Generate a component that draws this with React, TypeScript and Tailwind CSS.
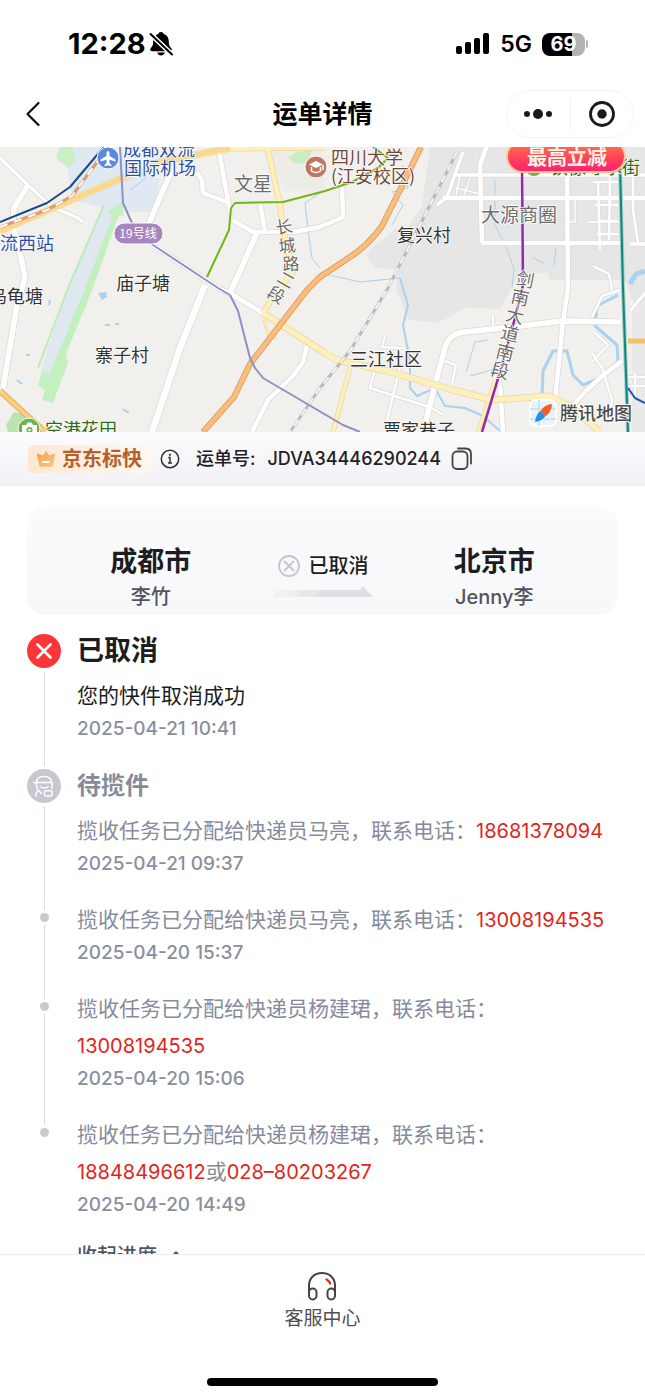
import { Fragment } from "react";

type Step = {
  title?: string;
  icon?: "cancel" | "courier";
  text: string;
  phones?: string[];
  time: string;
  active?: boolean;
};

const steps: Step[] = [
  {
    title: "已取消",
    icon: "cancel",
    text: "您的快件取消成功",
    time: "2025-04-21 10:41",
    active: true,
  },
  {
    title: "待揽件",
    icon: "courier",
    text: "揽收任务已分配给快递员马亮，联系电话：",
    phones: ["18681378094"],
    time: "2025-04-21 09:37",
  },
  {
    text: "揽收任务已分配给快递员马亮，联系电话：",
    phones: ["13008194535"],
    time: "2025-04-20 15:37",
  },
  {
    text: "揽收任务已分配给快递员杨建珺，联系电话：",
    phones: ["13008194535"],
    time: "2025-04-20 15:06",
  },
  {
    text: "揽收任务已分配给快递员杨建珺，联系电话：",
    phones: ["18848496612", "028–80203267"],
    time: "2025-04-20 14:49",
  },
];

// Map geometry: [path, width]
const whiteRoads: [string, number][] = [
  ["M0,158 L28,185 L52,207 L78,218 L83,222", 4],
  ["M28,185 L14,208 L13,225 L22,262 L25,278 L17,305 L3,388", 6],
  ["M174,165 L147,228", 6],
  ["M218,145 L230,212", 5],
  ["M190,172 L198,174 L202,180 L203,193 L227,202", 5],
  ["M232,220 L253,232 L293,232 L320,227 L343,217 L342,186", 5],
  ["M257,233 L230,293", 6],
  ["M205,285 L180,348 L152,432", 7],
  ["M260,203 L265,232", 5],
  ["M153,245 L218,288 L233,295 L263,313", 5],
  ["M307,346 L303,362 L293,376 L268,400 L252,432", 5],
  ["M487,145 L480,165 L482,243", 5],
  ["M443,198 L645,198", 5],
  ["M453,175 L645,175", 4],
  ["M463,152 L447,197 L437,205", 4],
  ["M482,243 L620,243", 5],
  ["M630,244 L645,244", 4],
  ["M567,172 L568,288 L563,321 L555,401", 5],
  ["M620,322 L563,321 L503,328 L465,332 Q448,334 445,348 L435,385 L423,432", 6],
  ["M385,336 L382,347 L402,348", 3],
  ["M376,366 L370,388 L432,408 L443,415", 3],
  ["M400,366 L387,421", 3],
  ["M445,361 L456,365 L452,384", 3],
  ["M493,316 L493,326", 3],
  ["M500,385 L503,432", 5],
  ["M622,361 L603,375 L585,392 L573,405", 5],
  ["M592,353 L602,368 L612,400 L610,420", 3],
  ["M592,362 L608,345 L594,332", 3],
  ["M645,293 L630,311", 4],
  ["M592,317 L602,296 L620,290", 3],
  ["M593,266 L609,274 L612,290", 3],
  ["M628,377 L645,377 M628,386 L645,386 M635,374 L635,396", 3],
  ["M593,182 L618,182 M595,205 L618,205 M597,221 L618,221 M597,234 L618,234", 3],
  ["M598,182 L600,250 M610,175 L609,240 M633,175 L633,210 L638,243", 3],
  ["M456,188 L480,194 M460,176 L456,195 M470,178 L463,198", 2],
  ["M575,200 L575,222 L568,222 M587,222 L620,222", 2],
];

const yellowRoads: [string, number][] = [
  ["M0,231 L60,205 L113,182 L160,162 L230,148 L325,147", 7],
  ["M267,145 L280,205 L283,228 L293,272 L273,297 L263,313", 6],
  ["M263,313 L280,324 L325,353 L337,360 L387,371 L453,390 L493,400 L550,396 L573,408 L600,432", 7],
  ["M350,368 L333,432", 5],
  ["M495,380 L478,432", 4],
  ["M263,315 L268,335 L275,338 L272,330", 3],
];

const rivers: [string, number][] = [
  ["M618,295 L597,306 L595,326 L617,345 L618,361 L600,378 L583,385 L573,375 L567,351 L553,351 L543,371 L542,398", 3],
  ["M645,271 L636,274 L630,284", 5],
  ["M400,278 L408,305 L403,325 L410,361 L410,388 L417,396 L435,388 L445,406 L465,408 L483,416 L500,431", 2],
  ["M320,273 L360,282 L400,278", 1],
  ["M402,165 L408,188 L392,192 L403,205 L392,225", 1],
  ["M320,193 L305,203 L308,230 L312,258 L320,268", 1],
  ["M505,245 L514,268 L512,288 M495,180 L495,225 L505,245", 1],
  ["M488,340 L475,342 L466,372 M500,352 L492,370 L470,376", 1],
  ["M532,257 L545,264 M556,248 L554,266", 1],
  ["M130,190 L146,178", 1],
  ["M50,300 L49,305 M105,325 h5 M115,324 h4 M26,355 h4 M17,380 l5,4 M123,409 l6,4", 2],
];

type Label = [text: string, x: number, y: number, size: number, fill: string];

const labels: Label[] = [
  ["成都双流", 123, 156, 18, "#2d50a5"],
  ["国际机场", 124, 175, 18, "#2d50a5"],
  ["流西站", 0, 250, 18, "#2d50a5"],
  ["文星", 234, 191, 19, "#6d6d6d"],
  ["四川大学", 331, 164, 18, "#70453a"],
  ["(江安校区)", 331, 183, 18, "#70453a"],
  ["复兴村", 397, 242, 18, "#333333"],
  ["大源商圈", 481, 222, 19, "#6d6d6d"],
  ["庙子塘", 116, 290, 18, "#333333"],
  ["乌龟塘", -11, 303, 18, "#333333"],
  ["寨子村", 95, 362, 18, "#333333"],
  ["三江社区", 350, 366, 18, "#333333"],
  ["空港花田", 45, 436, 18, "#2f6b22"],
  ["贾家巷子", 383, 437, 18, "#333333"],
  ["铁像寺水街", 550, 174, 18, "#2f6b22"],
];

// Street names that follow a road: [char, centre x, centre y, angle, size]
const streetChars: [string, number, number, number, number][] = [
  ["长", 284, 227, -8, 17],
  ["城", 287, 246, -6, 17],
  ["路", 291, 264, -2, 17],
  ["二", 286, 280, 30, 17],
  ["段", 276, 295, 30, 17],
  ["剑", 525, 280, 12, 18],
  ["南", 520, 298, 12, 18],
  ["大", 515, 316, 14, 18],
  ["道", 510, 334, 14, 18],
  ["南", 505, 353, 14, 18],
  ["段", 500, 371, 14, 18],
];

function DeliveryMap() {
  return (
    <svg
      viewBox="0 147 645 285"
      preserveAspectRatio="xMidYMid slice"
      className="block h-[285px] w-full bg-[#f1f0ed] font-['Noto_Sans_CJK_SC',sans-serif]"
      fill="none"
      strokeLinejoin="round"
    >
      <defs>
        <linearGradient id="promo" x1="0" y1="0" x2="0" y2="1">
          <stop offset="0" stopColor="#ff7a45" />
          <stop offset="0.6" stopColor="#ff3f5b" />
          <stop offset="1" stopColor="#ff1f74" />
        </linearGradient>
      </defs>

      {/* terrain */}
      <path
        d="M430,147 L645,147 L645,310 L632,300 L625,280 L550,280 L548,273 L520,273 L500,309 L465,308 L438,323 L408,320 L396,288 L400,240 L422,205 Z"
        fill="#e6e6e6"
      />
      <path d="M397,228 L402,270 L375,268 L366,255 L372,248 Z" fill="#e6e6e6" />
      <path d="M632,310 L645,300 L645,432 L632,432 Z" fill="#e9e9e9" />
      <path d="M78,147 L320,147 L325,190 L285,190 L275,165 L272,147 Z" fill="#ece8df" opacity="0.5" />
      <path d="M70,147 L104,147 L160,180 L152,212 L128,212 L122,203 L108,210 L92,205 L72,200 L68,170 Z" fill="#e0e9f1" />
      <path d="M104,205 L122,203 L84,290 L49,375 L41,369 L68,288 Z" fill="#dfe8f0" />
      <path d="M104,205 L68,288 L38,368" stroke="#bdebb9" strokeWidth="2" />
      <path
        d="M108,212 L122,202 L124,215 L118,217 L93,288 L66,354 L68,363 L53,403 L42,400 L45,390 L38,386 L42,370 L49,375 L85,288 L112,218 Z"
        fill="#c3f0bf"
      />
      <path d="M60,147 L72,147 L76,160 L68,168 L56,158 Z" fill="#cbefc4" />
      <path d="M288,158 L296,152 L312,150 L308,162 L296,164 Z" fill="#c9ecc0" />
      <path d="M6,425 L14,412 L28,415 L40,432 L8,432 Z" fill="#b9e4ae" />

      {rivers.map(([d, w]) => (
        <path key={d} d={d} stroke="#a9d1f0" strokeWidth={w} />
      ))}
      <path d="M98,293 L106,292 L107,297 L102,300 Z" fill="#a9d1f0" />

      {/* roads */}
      {whiteRoads.map(([d, w]) => (
        <path key={d} d={d} stroke="#dadada" strokeWidth={w + 1} />
      ))}
      {whiteRoads.map(([d, w]) => (
        <path key={d} d={d} stroke="#ffffff" strokeWidth={w - 0.5} />
      ))}
      {yellowRoads.map(([d, w]) => (
        <path key={d} d={d} stroke="#efd59a" strokeWidth={w} />
      ))}
      {yellowRoads.map(([d, w]) => (
        <path key={d} d={d} stroke="#fdf0bd" strokeWidth={w - 1.5} />
      ))}
      <path d="M0,231 L60,205 L113,182 L160,162 L230,148" stroke="#fbd78d" strokeWidth="5" />
      <path d="M0,391 L45,432" stroke="#e3aa5e" strokeWidth="6" />
      <path d="M0,391 L45,432" stroke="#fbcf82" strokeWidth="4" />
      <path d="M628,341 L645,341" stroke="#f4c169" strokeWidth="5" />

      {/* railways */}
      <path d="M457,152 L420,225 L388,288 L370,318 L350,351 L320,388 L290,432" stroke="#b9b9b9" strokeWidth="3" />
      <path
        d="M457,152 L420,225 L388,288 L370,318 L350,351 L320,388 L290,432"
        stroke="#f6f6f6"
        strokeWidth="2"
        strokeDasharray="8 5"
      />
      <path d="M0,227 L47,210 L72,196 L103,154" stroke="#d99a74" strokeWidth="3" />
      <path d="M0,227 L47,210 L72,196 L103,154" stroke="#ffffff" strokeWidth="2" strokeDasharray="8 7" />

      <path
        d="M421,147 L400,190 L382,226 Q368,246 347,259 L320,277 L307,290 L280,325 L250,364 L234,397 L203,432"
        stroke="#dd9350"
        strokeWidth="6"
      />
      <path
        d="M421,147 L400,190 L382,226 Q368,246 347,259 L320,277 L307,290 L280,325 L250,364 L234,397 L203,432"
        stroke="#f9bd7e"
        strokeWidth="4.500"
      />

      {/* metro lines */}
      <path d="M0,222 L47,203 L70,187 L97,155 L104,147" stroke="#174a8c" strokeWidth="2" />
      <path
        d="M120,147 L123,203 L132,223 L153,245 L218,288 L230,295 L238,311 L250,358 L255,368 L263,378 L343,425 L360,432"
        stroke="#8f8fc8"
        strokeWidth="2"
      />
      <path
        d="M207,277 L229,230 L231,208 L235,203 L283,202 L325,191 L352,182 L378,168 L388,158 L373,147"
        stroke="#6fb716"
        strokeWidth="2"
      />
      <path d="M522,165 L523,285 L515,318 L500,372 L482,432" stroke="#9427b0" strokeWidth="2.500" />
      <path d="M620,165 L623,288 L628,432" stroke="#9bd0cb" strokeWidth="4" />
      <path d="M620,165 L623,288 L628,432" stroke="#14857d" strokeWidth="2" />
      <path d="M628,388 L635,398 L645,403" stroke="#1f55b5" strokeWidth="2" />

      {/* points of interest */}
      <circle cx="108" cy="158" r="11" fill="#5a87e0" stroke="#ffffff" />
      <path
        d="M108,151 q1.5,0 1.5,2 v3 l6,3.600 v2 l-6,-1.800 v3.500 l2,1.600 v1.300 l-3.500,-1 l-3.500,1 v-1.300 l2,-1.600 v-3.500 l-6,1.800 v-2 l6,-3.600 v-3 q0,-2 1.500,-2 z"
        fill="#ffffff"
      />
      <circle cx="316" cy="167" r="11" fill="#c0765f" stroke="#ffffff" />
      <path d="M316,161 L323,164.500 L316,168 L309,164.500 Z" fill="#ffffff" />
      <path d="M311.500,167 v4 q4.500,3 9,0 v-4 M323,165 v5" stroke="#ffffff" strokeWidth="1.500" />
      <circle cx="29" cy="429" r="11" fill="#6ab648" stroke="#ffffff" />
      <path d="M22,425 h4 l1.500,-2.500 h4 l1.500,2.500 h4 v11 h-15 z" fill="#ffffff" />
      <circle cx="29.500" cy="430" r="3" fill="#6ab648" />
      <circle cx="29.500" cy="430" r="1.300" fill="#ffffff" />
      <circle cx="534" cy="168" r="8" fill="#6ab648" />

      <rect x="114" y="223" width="49" height="21" rx="10.500" fill="#a985bf" stroke="#ffffff" />
      <text x="138" y="238" fontSize="12" fill="#ffffff" textAnchor="middle">
        19号线
      </text>

      {labels.map(([text, x, y, size, fill]) => (
        <text
          key={text}
          x={x}
          y={y}
          fontSize={size}
          fill={fill}
          stroke="#ffffff"
          strokeWidth="1.500"
          paintOrder="stroke"
        >
          {text}
        </text>
      ))}
      {streetChars.map(([char, x, y, angle, size], i) => (
        <text
          key={i}
          x={x}
          y={y + 6}
          fontSize={size}
          fill="#6a6a6a"
          stroke="#ffffff"
          strokeWidth="1.500"
          paintOrder="stroke"
          textAnchor="middle"
          transform={`rotate(${angle} ${x} ${y})`}
        >
          {char}
        </text>
      ))}

      {/* promo ribbon */}
      <rect x="507" y="141" width="118" height="31" rx="15.500" fill="url(#promo)" stroke="#ffc58d" strokeWidth="2" />
      <text x="567" y="165" fontSize="20" fontWeight="700" fill="#fff3e6" textAnchor="middle">
        最高立减
      </text>

      {/* map provider */}
      <rect x="530" y="400" width="26" height="26" rx="6" fill="#eaf3fd" stroke="#ffffff" strokeWidth="2" />
      <path d="M530,409 h26 M539,400 v26 M530,419 h26" stroke="#cfe2f7" strokeWidth="2" />
      <path d="M552,404 Q551,413 545.500,416 L540.500,411 Q544,405 552,404 Z" fill="#fb5a1e" />
      <path d="M535,422 Q536,414 540.500,411 L545.500,416 Q542,421 535,422 Z" fill="#2390ea" />
      <text
        x="560"
        y="420"
        fontSize="18"
        fontWeight="500"
        fill="#4a4a4a"
        stroke="#ffffff"
        strokeWidth="2"
        paintOrder="stroke"
      >
        腾讯地图
      </text>
    </svg>
  );
}

function StatusBar() {
  return (
    <div className="flex h-[88px] items-center justify-between pr-[57px] pl-[68px] text-black">
      <div className="flex items-center gap-0.5">
        <span className="text-[29px] leading-8 font-bold">12:28</span>
        <svg width="26" height="26" viewBox="0 0 26 26">
          <path
            d="M13 1c1.500 0 2.500.8 2.700 2.100 3.300 1 5.100 3.900 5.100 7.400 0 4.300 1.400 5.300 2.700 7 .9 1.200 0 2.700-1.500 2.700H4c-1.500 0-2.400-1.500-1.500-2.700 1.300-1.700 2.700-2.700 2.700-7 0-3.500 1.800-6.400 5.100-7.400C10.500 1.800 11.500 1 13 1z"
            fill="#000"
          />
          <path d="M9.300 21.600h7.400c-.4 1.800-1.900 2.900-3.700 2.900s-3.300-1.100-3.700-2.900z" fill="#000" />
          <path d="M2 2.500 24.500 24" stroke="#fff" strokeWidth="5" />
          <path d="M2.500 3 24 23.500" stroke="#000" strokeWidth="2" strokeLinecap="round" />
        </svg>
      </div>
      <div className="flex items-center">
        <svg width="34" height="22" viewBox="0 0 34 22">
          <rect x="0" y="13" width="6" height="8" rx="2" />
          <rect x="9" y="9" width="6" height="12" rx="2" />
          <rect x="18" y="5" width="6" height="16" rx="2" />
          <rect x="27" y="0" width="6" height="21" rx="2" />
        </svg>
        <span className="ml-2.5 text-[23px] leading-7 font-semibold">5G</span>
        <div className="ml-2.5 flex h-[23px] w-[43px] items-center justify-center rounded-lg bg-linear-to-r from-black from-69% to-[#b3b3b3] to-69% text-[20px] leading-6 font-bold text-white">
          69
        </div>
        <span className="ml-px h-2 w-[2px] rounded-r-full bg-[#b3b3b3]" />
      </div>
    </div>
  );
}

function NavBar() {
  return (
    <div className="mb-[7px] grid h-[52px] grid-cols-[1fr_auto_1fr] items-center px-[11px]">
      <button aria-label="返回" className="w-11 pl-[11px]">
        <svg width="22" height="28" viewBox="0 0 22 28" fill="none">
          <path d="M16.500 3 5.500 14l11 11" stroke="#111" strokeWidth="2.200" strokeLinecap="round" strokeLinejoin="round" />
        </svg>
      </button>
      <h1 className="text-[25px] leading-8 font-bold text-black">运单详情</h1>
      <div className="flex h-12 w-32 items-center justify-self-end rounded-full border border-[#f4f4f4] bg-white">
        <button aria-label="更多" className="flex flex-1 justify-center">
          <svg width="30" height="12" viewBox="0 0 30 12" fill="#1a1a1a">
            <circle cx="4" cy="6" r="3" />
            <circle cx="15" cy="6" r="5" />
            <circle cx="26" cy="6" r="3" />
          </svg>
        </button>
        <span className="h-[30px] w-px bg-[#f0f0f0]" />
        <button aria-label="关闭" className="flex flex-1 justify-center">
          <svg width="28" height="28" viewBox="0 0 28 28" fill="none">
            <circle cx="14" cy="14" r="11.500" stroke="#1a1a1a" strokeWidth="2.800" />
            <circle cx="14" cy="14" r="4.700" fill="#1a1a1a" />
          </svg>
        </button>
      </div>
    </div>
  );
}

function WaybillBar() {
  return (
    <div className="flex h-[54px] items-center bg-linear-to-b from-[#fcfcfe] to-[#f1f1f6] pl-7 text-[#1f2024]">
      <div className="flex h-7 w-[124px] items-center gap-1.5 rounded-md bg-linear-to-r from-[#fde7d3] to-[#fff8f0] pl-2">
        <svg width="20" height="18" viewBox="0 0 20 18">
          <defs>
            <linearGradient id="crown" x1="0" y1="0" x2="1" y2="1">
              <stop offset="0" stopColor="#f7a04f" />
              <stop offset="1" stopColor="#ffc386" />
            </linearGradient>
          </defs>
          <path
            d="M10 .8 13.200 5.600l4.600-1.900c.8-.3 1.500.3 1.300 1.100l-2.200 10.400c-.2.900-.9 1.500-1.800 1.500H4.900c-.9 0-1.600-.6-1.800-1.500L.9 4.800C.7 4 1.400 3.400 2.200 3.700l4.600 1.900z"
            fill="url(#crown)"
          />
          <path d="M7 12h6" stroke="#fff" strokeWidth="1.800" strokeLinecap="round" />
        </svg>
        <span className="text-[20px] leading-7 font-bold text-[#b5602a]">京东标快</span>
      </div>
      <button aria-label="说明" className="ml-2">
        <svg width="20" height="20" viewBox="0 0 20 20" fill="none" stroke="#333">
          <circle cx="10" cy="10" r="8.700" strokeWidth="1.500" />
          <path d="M8.300 8.500H10V14M8 14h4" strokeWidth="1.500" />
          <circle cx="10" cy="5.700" r="0.700" fill="#333" />
        </svg>
      </button>
      <p className="ml-4 text-[18px] leading-7 font-medium">
        <span className="mr-3">运单号:</span>
        JDVA34446290244
      </p>
      <button aria-label="复制" className="ml-2.5">
        <svg width="22" height="24" viewBox="0 0 22 24" fill="none" stroke="#444" strokeWidth="1.800">
          <rect x="1.500" y="4.500" width="15" height="17.500" rx="4.500" />
          <path d="M7 1.500h7.500Q20 1.500 20 7v9.500" strokeLinecap="round" />
        </svg>
      </button>
    </div>
  );
}

function City({ city, name }: { city: string; name: string }) {
  return (
    <div className="flex flex-col items-center">
      <span className="text-[27px] leading-9 font-bold text-[#1c1d21]">{city}</span>
      <span className="text-[20px] leading-[34px] font-medium text-[#50545f]">{name}</span>
    </div>
  );
}

function RouteCard() {
  return (
    <section className="mx-[27px] mt-5 grid h-[109px] grid-cols-[5fr_2fr_5fr] items-end rounded-[20px] bg-linear-to-b from-[#fbfbfd] to-[#f8f8fa] px-0.5 pb-px">
      <City city="成都市" name="李竹" />
      <div className="flex flex-col items-center gap-2 pb-4">
        <div className="flex items-center gap-2 text-[20px] leading-6 font-medium whitespace-nowrap text-[#1c1d21]">
          <svg width="24" height="24" viewBox="0 0 24 24" fill="none" stroke="#c4c6cc">
            <circle cx="12" cy="12" r="10" strokeWidth="1.800" />
            <path d="m7.500 7.500 9 9m0-9-9 9" strokeWidth="1.800" strokeLinecap="round" />
          </svg>
          已取消
        </div>
        <svg width="100" height="12" viewBox="0 0 100 12">
          <path d="M3 4h14l-3 7H0z" fill="#f2f2f4" />
          <path d="M17 4h10l-3 7H14z" fill="#eeeef0" />
          <path d="M27 4h18l-3 7H24z" fill="#e7e8ea" />
          <path d="M45 4h42l3-4 10 11H42z" fill="#dfe0e3" />
        </svg>
      </div>
      <City city="北京市" name="Jenny李" />
    </section>
  );
}

function StepIcon({ icon }: { icon: Step["icon"] }) {
  if (icon === "cancel") {
    return (
      <svg className="my-[3px]" width="34" height="34" viewBox="0 0 34 34" fill="none">
        <circle cx="17" cy="17" r="17" fill="#fb3538" />
        <path d="m10.500 10.500 13 13m0-13-13 13" stroke="#fff" strokeWidth="2.600" strokeLinecap="round" />
      </svg>
    );
  }
  return (
    <svg className="my-[3px]" width="34" height="34" viewBox="0 0 34 34" fill="none">
      <circle cx="17" cy="17" r="17" fill="#c5c8d0" />
      <g stroke="#fff" strokeWidth="1.500" strokeLinecap="round" strokeLinejoin="round">
        <path d="M9.500 13.500C9.500 9.500 12.500 7.500 17 7.500s7.500 2 7.500 6" />
        <path d="M6.500 13.500h18.500" />
        <path d="M9.500 14v3c0 2.200.8 3.800 2.400 4.900M25 14v3.500c0 .7-.1 1.200-.3 1.800" />
        <path d="M13 17.500c2.200 2 6 2 8.200 0" />
        <path d="M9 27v-2.500c0-1.200.8-2.200 2.900-2.600l2.600 2.600" />
        <rect x="17.500" y="21.800" width="7.500" height="5.200" rx="1" />
      </g>
    </svg>
  );
}

function TimelineItem({ step, last }: { step: Step; last: boolean }) {
  return (
    <li className="flex gap-4">
      <div className="flex w-[34px] shrink-0 flex-col items-center">
        {step.icon ? (
          <StepIcon icon={step.icon} />
        ) : (
          <>
            <span className="h-[9px] w-px bg-[#dcdde2]" />
            <span className="my-[3px] size-[9px] rounded-full bg-[#c8cad2]" />
          </>
        )}
        {!last && <span className="w-px flex-1 bg-[#dcdde2]" />}
      </div>
      <div className="min-w-0 flex-1 pb-[22px]">
        {step.title && (
          <h2
            className={
              step.active
                ? "mb-1.5 text-[27px] leading-10 font-bold text-[#1c1d21]"
                : "mb-1.5 text-[24px] leading-10 font-bold text-[#868b9b]"
            }
          >
            {step.title}
          </h2>
        )}
        <p
          className={
            step.active
              ? "text-[21px] leading-[37px] text-[#1c1d21]"
              : "text-[21px] leading-[37px] text-[#868b9b]"
          }
        >
          {step.text}
          {step.phones?.map((phone, i) => (
            <Fragment key={phone}>
              {i > 0 && "或"}
              <a href={`tel:${phone}`} className="text-[20px] leading-none whitespace-nowrap text-[#e1251b]">
                {phone}
              </a>
            </Fragment>
          ))}
        </p>
        <time className="block text-[19px] leading-[30px] font-medium text-[#8a8fa0]">{step.time}</time>
      </div>
    </li>
  );
}

export default function App() {
  return (
    <div className="flex h-screen flex-col bg-white font-[Inter,'Noto_Sans_CJK_SC',sans-serif]">
      <header>
        <StatusBar />
        <NavBar />
      </header>

      <main className="min-h-0 flex-1 overflow-hidden">
        <DeliveryMap />
        <WaybillBar />
        <RouteCard />
        <ol className="mt-4 pr-[27px] pl-[27px]">
          {steps.map((step, index) => (
            <TimelineItem key={step.time} step={step} last={index === steps.length - 1} />
          ))}
        </ol>
        <button className="ml-[77px] flex items-center gap-3 text-[20px] leading-7 font-medium text-[#50545f]">
          收起进度
          <svg width="14" height="10" viewBox="0 0 14 10" fill="none">
            <path d="m1.500 7 5.500-5.500 5.500 5.500" stroke="#50545f" strokeWidth="2.200" strokeLinejoin="round" />
          </svg>
        </button>
      </main>

      <footer className="flex h-36 shrink-0 flex-col items-center border-t border-[#ebebf1] bg-white pt-4">
        <button className="flex flex-col items-center gap-1 text-[19px] leading-7 text-[#4f4f4f]">
          <svg width="30" height="30" viewBox="0 0 30 30" fill="none" stroke="#444" strokeWidth="2">
            <path d="M2 22V14.500C2 7 7.500 2 15 2s13 5 13 12.500V22" />
            <rect x="2" y="17.500" width="7.500" height="11" rx="3.700" />
            <rect x="20.500" y="17.500" width="7.500" height="11" rx="3.700" />
            <path d="M19.500 8.500q2.500 1.200 3.700 4" stroke="#e1251b" strokeWidth="2.200" strokeLinecap="round" />
          </svg>
          客服中心
        </button>
        <div className="mt-auto mb-3 h-2 w-[231px] rounded-full bg-black" />
      </footer>
    </div>
  );
}
